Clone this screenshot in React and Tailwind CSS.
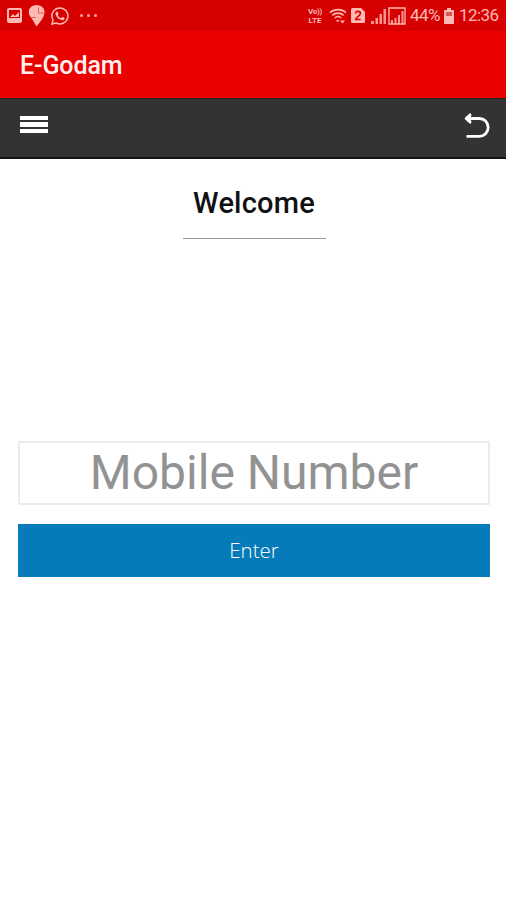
import React, { useState } from 'react';

function StatusBar() {
  return (
    <div className="flex h-[31px] w-full items-center bg-[#d60000] text-[#ffb9b4]">
      <svg className="ml-[7px] h-[15px] w-[15px]" viewBox="0 0 15 15" fill="none">
        <rect x="1" y="1" width="13" height="13" rx="1" stroke="currentColor" strokeWidth="2" />
        <path d="M2 10h11v3H2z" fill="currentColor" />
        <path d="M3 9l3-3 2 2 4-4v5z" fill="currentColor" />
      </svg>

      <svg className="ml-[6px] h-[24px] w-[17px]" viewBox="0 0 17 24">
        <path d="M8.500 1C4 1 .8 4 .8 8c0 2 .7 3.500 1.500 4.500L5 16.500l3.500 6c4-5 8-9.500 8-14.500 0-4-3.200-7-8-7z" fill="currentColor" />
        <path d="M10.500 3.500v5.500H16M2 13.500h6" stroke="#e04540" strokeWidth=".8" fill="none" />
      </svg>

      <svg className="ml-[6px] h-[18px] w-[18px]" viewBox="0 0 24 24" fill="currentColor">
        <path d="M17.472 14.382c-.297-.149-1.758-.867-2.030-.967-.273-.099-.471-.148-.670.150-.197.297-.767.966-.940 1.164-.173.199-.347.223-.644.075-.297-.150-1.255-.463-2.390-1.475-.883-.788-1.480-1.761-1.653-2.059-.173-.297-.018-.458.130-.606.134-.133.298-.347.446-.520.149-.174.198-.298.298-.497.099-.198.050-.371-.025-.520-.075-.149-.669-1.612-.916-2.207-.242-.579-.487-.500-.669-.510-.173-.008-.371-.010-.570-.010-.198 0-.520.074-.792.372-.272.297-1.040 1.016-1.040 2.479 0 1.462 1.065 2.875 1.213 3.074.149.198 2.096 3.200 5.077 4.487 2.500 1 3.200.800 3.700.700.600-.100 1.758-.719 2.006-1.413.248-.694.248-1.289.173-1.413-.074-.124-.272-.198-.570-.347z" />
        <path d="M12 1.200a10.700 10.700 0 0 0-9.200 16.200L1.300 22.700l5.500-1.400A10.700 10.700 0 1 0 12 1.200z" fill="none" stroke="currentColor" strokeWidth="2" />
      </svg>

      <div className="ml-[11px] flex gap-[4px]">
        <span className="h-[3px] w-[3px] rounded-full bg-[#ff9e9a]" />
        <span className="h-[3px] w-[3px] rounded-full bg-[#ff9e9a]" />
        <span className="h-[3px] w-[3px] rounded-full bg-[#ff9e9a]" />
      </div>

      <div className="ml-auto flex h-full w-[16px] flex-col items-center justify-center text-[8px] font-bold leading-[9px]">
        <span className="tracking-[-0.300px]">Vo))</span>
        <span>LTE</span>
      </div>

      <svg className="ml-[6px] h-[16px] w-[18px]" viewBox="0 0 18 16" fill="none" stroke="currentColor">
        <path d="M1 4.600c4.500-4 11.500-4 16 0M3.300 7.400c3.300-3 8.100-3 11.400 0M5.700 10c2-1.800 4.600-1.800 6.600 0" strokeWidth="1.600" />
        <path d="M7 12h3.500L8.700 14.200zM11 12.500h5L13.500 15.500z" fill="currentColor" stroke="none" />
      </svg>

      <svg className="ml-[4px] h-[15px] w-[14px]" viewBox="0 0 14 15">
        <path d="M1.500 0H10l4 4v9.500q0 1.500-1.500 1.500h-11Q0 15 0 13.500v-12Q0 0 1.500 0z" fill="currentColor" />
        <path d="M4.500 5.500c0-3 5-2.700 5 0 0 2-4.500 3.700-4.800 6h5" stroke="#d60000" strokeWidth="1.600" fill="none" />
      </svg>

      <svg className="ml-[6px] mr-[1px] h-[16px] w-[16px]" viewBox="0 0 16 16" fill="currentColor">
        <path d="M0 13h3v3H0zM4.500 10h2.500v6H4.500zM8.500 6H11v10H8.500zM12.500 1H15v15h-2.500z" opacity=".8" />
      </svg>
      <svg className="h-[18px] w-[18px]" viewBox="0 0 18 18">
        <path d="M1 1H17v16H1z" fill="none" stroke="currentColor" strokeWidth="1.300" />
        <path d="M3 13h2v4H3zM6.500 11h2v6h-2zM10 8h2v9h-2zM13.500 4h2v13h-2z" fill="currentColor" opacity=".8" />
      </svg>

      <span className="ml-[4px] w-[31px] whitespace-nowrap text-[17px] leading-none tracking-[-0.600px]">44%</span>

      <svg className="ml-[3px] h-[16px] w-[10px]" viewBox="0 0 10 16">
        <path d="M3 0h4v2H3zM1 2h8q1 0 1 1v12q0 1-1 1H1q-1 0-1-1V3q0-1 1-1z" fill="currentColor" />
        <path d="M2 4h6v4H2z" fill="#df5550" />
      </svg>

      <span className="ml-[5px] mr-[7px] w-[40px] whitespace-nowrap text-[17px] leading-none tracking-[-0.600px]">12:36</span>
    </div>
  );
}

export default function App() {
  const [mobile, setMobile] = useState('');

  return (
    <div className="flex h-[900px] w-[506px] flex-col overflow-hidden bg-white font-['Roboto',sans-serif]">
      <StatusBar />

      <header className="flex h-[67px] items-center bg-[#eb0000] pl-[20px] pt-[2px]">
        <h1 className="text-[25px] font-medium leading-none tracking-[-0.100px] text-[#fff0ee]">E-Godam</h1>
      </header>

      <nav className="flex h-[61px] items-start justify-between border-b-2 border-t border-b-[#151515] border-t-[#222222] bg-[#333333] pl-[20px] pr-[16px]">
        <button className="mt-[17px] flex w-[28px] flex-col gap-[2px]">
          <span className="h-[4px] w-full bg-white" />
          <span className="h-[5px] w-full bg-white" />
          <span className="h-[4px] w-full bg-white" />
        </button>
        <button className="mt-[13px]">
          <svg className="h-[27px] w-[26px]" viewBox="0 0 26 27" fill="none">
            <path d="M5 6.500h10.300a8.900 8.900 0 0 1 0 17.800H2.500" stroke="white" strokeWidth="2.800" />
            <path d="M7 2L2 6.500L7 11" stroke="white" strokeWidth="2.600" strokeLinejoin="round" fill="white" />
          </svg>
        </button>
      </nav>

      <main className="flex flex-1 flex-col items-center pl-[18px] pr-[16px]">
        <h2 className="mt-[28px] w-[143px] border-b border-[#999999] pb-[19px] text-center text-[29px] font-medium leading-[32px] tracking-[0.200px] text-[#111111]">
          Welcome
        </h2>

        <input
          type="tel"
          value={mobile}
          onChange={(e) => setMobile(e.target.value)}
          placeholder="Mobile Number"
          className="mt-[202px] h-[64px] w-full border-2 border-[#ececec] bg-white text-center text-[48px] text-[#555555] outline-none placeholder:text-[#929292]"
        />

        <button className="mt-[19px] h-[53px] w-full bg-[#067bb9] font-['Open_Sans',sans-serif] text-[20.500px] font-light text-white">
          Enter
        </button>
      </main>
    </div>
  );
}
